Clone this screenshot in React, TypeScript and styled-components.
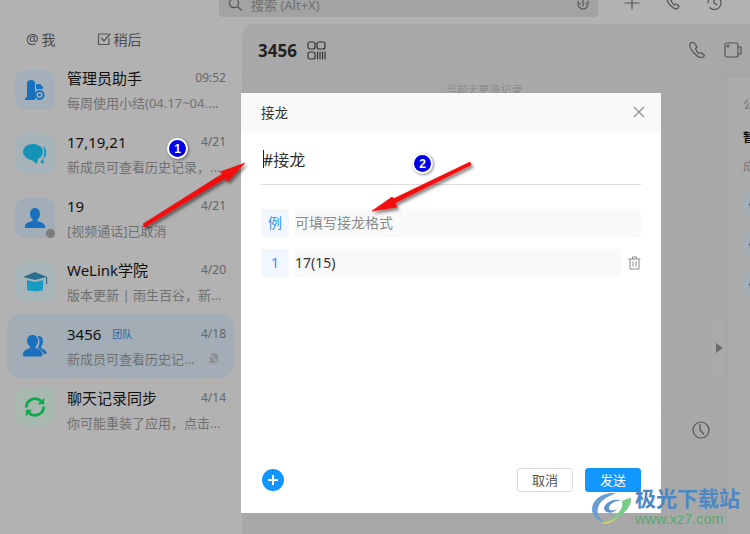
import React from 'react';
import styled, { createGlobalStyle } from 'styled-components';

const GlobalStyle = createGlobalStyle`
  html, body {
    margin: 0;
    padding: 0;
    background: #b2b2b2;
  }
  * {
    box-sizing: border-box;
  }
  body {
    font-family: "Noto Sans", "Noto Sans CJK SC", sans-serif;
  }
`;

const Root = styled.div`
  position: relative;
  width: 750px;
  height: 534px;
  overflow: hidden;
  display: flex;
  flex-direction: column;
  background: #b2b2b2;
`;

const TopBar = styled.div`
  height: 24px;
  flex-shrink: 0;
  display: flex;
  align-items: flex-start;
  padding-left: 219px;
  overflow: hidden;
`;

const SearchBox = styled.div`
  width: 379px;
  height: 26px;
  margin-top: -9px;
  padding: 0 7px 0 9px;
  display: flex;
  align-items: center;
  gap: 9px;
  border-radius: 4px;
  background: #a3a3a3;
  color: #6f6f6f;
  font-size: 13px;
`;

const SearchText = styled.span`
  flex: 1;
`;

const TopActions = styled.div`
  display: flex;
  gap: 23px;
  margin-left: 25px;
  margin-top: -6px;
`;

const Body = styled.div`
  flex: 1;
  display: flex;
  min-height: 0;
`;

const Sidebar = styled.aside`
  width: 242px;
  flex-shrink: 0;
  display: flex;
  flex-direction: column;
`;

const Tabs = styled.div`
  height: 34px;
  padding: 0 0 5px 26px;
  display: flex;
  align-items: center;
  gap: 41px;
`;

const Tab = styled.div`
  display: flex;
  align-items: center;
  gap: 3px;
  font-size: 14px;
  color: #4c4c4c;
`;

const ChatList = styled.div`
  display: flex;
  flex-direction: column;
`;

const ChatRow = styled.div<{ $active?: boolean }>`
  width: 227px;
  height: 64px;
  margin-left: 7px;
  padding: 0 8px;
  display: flex;
  align-items: center;
  gap: 12px;
  border-radius: 14px;
  background: ${({ $active }) => ($active ? '#a2adb6' : 'transparent')};
`;

const IconTile = styled.div<{ $bg: string; $lift?: boolean }>`
  position: relative;
  width: 40px;
  height: 40px;
  flex-shrink: 0;
  margin-bottom: ${({ $lift }) => ($lift ? '6px' : '0')};
  display: flex;
  align-items: center;
  justify-content: center;
  border-radius: 11px;
  background: ${({ $bg }) => $bg};
`;

const StatusDot = styled.span`
  position: absolute;
  right: 0;
  bottom: 0;
  width: 9px;
  height: 9px;
  border-radius: 50%;
  background: #7c7c7c;
`;

const ChatInfo = styled.div`
  flex: 1;
  min-width: 0;
  display: flex;
  flex-direction: column;
  gap: 5px;
`;

const ChatLine = styled.div`
  display: flex;
  align-items: center;
  justify-content: space-between;
  height: 20px;
`;

const ChatName = styled.div`
  display: flex;
  align-items: center;
  gap: 11px;
  font-size: 15px;
  color: #111;
`;

const TeamTag = styled.span`
  font-size: 10px;
  color: #2a6aa5;
`;

const ChatTime = styled.span`
  font-size: 12px;
  color: #666;
`;

const ChatPreview = styled.span`
  font-size: 13px;
  color: #707070;
  white-space: nowrap;
`;

const MuteIcon = styled.svg`
  margin-right: 5px;
`;

const ChatPanel = styled.main`
  flex: 1;
  min-width: 0;
  display: flex;
  flex-direction: column;
  border-top-left-radius: 12px;
  background: #a8a8a8;
`;

const PanelHeader = styled.header`
  height: 53px;
  flex-shrink: 0;
  padding: 0 8px 0 16px;
  display: flex;
  align-items: center;
  gap: 10px;
  border-bottom: 1px solid #a2a2a2;
`;

const PanelTitle = styled.h1`
  margin: 0;
  font-size: 17px;
  font-weight: 700;
  color: #222;
`;

const HeaderActions = styled.div`
  margin-left: auto;
  display: flex;
  gap: 18px;
`;

const PanelBody = styled.div`
  flex: 1;
  display: flex;
  min-height: 0;
`;

const Conversation = styled.section`
  position: relative;
  flex: 1;
  display: flex;
  flex-direction: column;
`;

const Notice = styled.div`
  flex: 1;
  padding-top: 4px;
  text-align: center;
  font-size: 11px;
  color: #8c8c8c;
`;

const Compose = styled.div`
  height: 122px;
  padding: 8px 16px 0 0;
  display: flex;
  justify-content: flex-end;
  align-items: flex-start;
  border-top: 1px solid #a2a2a2;
`;

const CollapseHandle = styled.div`
  position: absolute;
  right: 0;
  top: 243px;
  width: 15px;
  height: 56px;
  display: flex;
  align-items: center;
  justify-content: center;
  border-radius: 8px 0 0 8px;
  background: #aaaaaa;
`;

const Triangle = styled.span`
  width: 0;
  height: 0;
  border-top: 5px solid transparent;
  border-bottom: 5px solid transparent;
  border-left: 7px solid #6c6c6c;
  margin-left: 2px;
`;

const SidePanel = styled.aside`
  width: 24px;
  flex-shrink: 0;
  padding: 17px 0 0 16px;
  display: flex;
  flex-direction: column;
  border-left: 1px solid #a2a2a2;
  background: #ababab;
  overflow: hidden;
  white-space: nowrap;
`;

const SideLabel = styled.div<{ $dark?: boolean }>`
  height: ${({ $dark }) => ($dark ? '30px' : '20px')};
  margin-bottom: ${({ $dark }) => ($dark ? '4px' : '8px')};
  display: flex;
  align-items: center;
  font-size: 12px;
  font-weight: ${({ $dark }) => ($dark ? 700 : 400)};
  color: ${({ $dark }) => ($dark ? '#111' : '#737373')};
`;

const SidePills = styled.div`
  display: flex;
  flex-direction: column;
  gap: 16px;
  margin-top: 8px;
`;

const SidePill = styled.div`
  width: 24px;
  height: 24px;
  display: flex;
  align-items: center;
  padding-left: 6px;
  border-radius: 6px;
  background: #a2adb6;
  &::before {
    content: '';
    width: 3px;
    height: 3px;
    border-radius: 50%;
    background: #1a6cb2;
  }
`;

const Dialog = styled.div`
  position: absolute;
  left: 241px;
  top: 93px;
  width: 420px;
  height: 420px;
  display: flex;
  flex-direction: column;
  background: #fff;
`;

const ModalHeader = styled.div`
  height: 40px;
  flex-shrink: 0;
  padding: 0 16px 2px 20px;
  display: flex;
  align-items: center;
  justify-content: space-between;
  background: #f9f9f9;
  font-size: 13.5px;
  color: #333;
`;

const ModalBody = styled.div`
  flex: 1;
  padding: 0 20px;
  display: flex;
  flex-direction: column;
`;

const TitleField = styled.div`
  height: 52px;
  flex-shrink: 0;
  margin-bottom: 24px;
  padding-left: 2px;
  display: flex;
  align-items: center;
  border-bottom: 1px solid #dcdcdc;
  font-size: 16px;
  color: #333;
`;

const Caret = styled.span`
  width: 1px;
  height: 18px;
  margin-right: -1px;
  background: #222;
`;

const EntryRow = styled.div`
  display: flex;
  align-items: center;
  gap: 6px;
  height: 28px;
  margin-bottom: 12px;
`;

const EntryIndex = styled.div`
  width: 28px;
  height: 28px;
  flex-shrink: 0;
  padding-bottom: 2px;
  display: flex;
  align-items: center;
  justify-content: center;
  border-radius: 3px;
  background: #f0f7ff;
  color: #2f94f5;
  font-size: 14px;
`;

const EntryField = styled.div<{ $muted?: boolean }>`
  flex: 1;
  height: 28px;
  padding-bottom: 2px;
  display: flex;
  align-items: center;
  border-radius: 3px;
  background: #f9f9f9;
  font-size: 14px;
  color: ${({ $muted }) => ($muted ? '#8a8a8a' : '#333')};
`;

const TrashButton = styled.div`
  width: 14px;
  flex-shrink: 0;
  display: flex;
  justify-content: center;
`;

const ModalFooter = styled.div`
  height: 66px;
  flex-shrink: 0;
  padding: 0 20px 0 21px;
  display: flex;
  align-items: flex-start;
  justify-content: space-between;
`;

const AddButton = styled.div`
  width: 22px;
  height: 22px;
  margin-top: 22px;
  border-radius: 50%;
  background: #1296ff;
  display: flex;
  align-items: center;
  justify-content: center;
`;

const FooterActions = styled.div`
  display: flex;
  gap: 12px;
  margin-top: 21px;
`;

const Button = styled.div<{ $primary?: boolean }>`
  width: 56px;
  height: 24px;
  padding-bottom: 2px;
  display: flex;
  align-items: center;
  justify-content: center;
  border-radius: 3px;
  font-size: 13px;
  color: ${({ $primary }) => ($primary ? '#fff' : '#555')};
  background: ${({ $primary }) => ($primary ? '#1296ff' : '#fff')};
  border: 1px solid ${({ $primary }) => ($primary ? '#1296ff' : '#dcdcdc')};
`;

const AnnotationLayer = styled.svg`
  position: absolute;
  left: 0;
  top: 0;
  width: 750px;
  height: 534px;
  pointer-events: none;
`;

const StepBadge = styled.div<{ $x: number; $y: number }>`
  position: absolute;
  left: ${({ $x }) => $x}px;
  top: ${({ $y }) => $y}px;
  width: 21px;
  height: 21px;
  display: flex;
  align-items: center;
  justify-content: center;
  border-radius: 50%;
  border: 2px solid #fff;
  background: #0000e6;
  box-shadow: 1px 1px 3px rgba(0, 0, 0, 0.45);
  color: #fff;
  font-family: "Liberation Sans", sans-serif;
  font-size: 12px;
  font-weight: 700;
`;

const Watermark = styled.div`
  position: absolute;
  left: 590px;
  top: 484px;
  display: flex;
  align-items: flex-start;
  gap: 1px;
`;

const WatermarkText = styled.div`
  display: flex;
  flex-direction: column;
  align-items: flex-start;
`;

const WatermarkTitle = styled.span`
  font-family: "Noto Sans CJK SC", sans-serif;
  font-size: 21px;
  line-height: 26px;
  font-weight: 700;
  color: #4b88c4;
`;

const WatermarkUrl = styled.span`
  margin-top: 1px;
  font-family: "Liberation Sans", sans-serif;
  font-size: 14.5px;
  line-height: 16px;
  color: #58a870;
`;

const line = { fill: 'none', stroke: '#555', strokeWidth: 1.2, strokeLinecap: 'round', strokeLinejoin: 'round' } as const;

const BlueFill = '#1a70bc';

const icons = {
  admin: (
    <svg width="20" height="20" viewBox="0 0 20 20">
      <path d="M0 20v-2l2-1V3c0-2 2-3 4-3 2.500 0 4 1 4 3v17z" fill={BlueFill} />
      <path d="M11 4h4l3 3v2h-7z" fill={BlueFill} />
      <circle cx="14.500" cy="15" r="5" fill={BlueFill} />
      <circle cx="14.500" cy="15" r="3" fill="#a5afb9" />
      <circle cx="14.500" cy="15" r="1.400" fill={BlueFill} />
    </svg>
  ),
  group: (
    <svg width="24" height="21" viewBox="0 0 24 21">
      <ellipse cx="10" cy="8" rx="10" ry="8" fill="#1593b5" />
      <path d="M6 14l9 1-1 5z" fill="#1593b5" />
      <path d="M20 2c4 3 5 9 0 13l1 5-4-2c3-2 6-8 3-16z" fill="#1593b5" />
    </svg>
  ),
  user: (
    <svg width="22" height="22" viewBox="0 0 22 22">
      <path d="M11 1c3 0 5 2.500 5 6 0 2.500-1.200 4.500-2.500 5.500v1.500c3 1 6.500 2 7.500 4.500v2.500H1v-2.500C2 15.500 5.500 15 8.500 14v-1.500C7.200 11.500 6 9.500 6 7c0-3.500 2-6 5-6z" fill={BlueFill} />
    </svg>
  ),
  academy: (
    <svg width="26" height="24" viewBox="0 0 26 24">
      <path d="M13 2L25 7l-12 3L1 7z" fill="#2b6f8e" />
      <path d="M5 10l8 2 8-2v10c-2 1.500-14 1.500-16 0z" fill="#159bc4" />
      <rect x="24" y="7" width="1.200" height="7" fill="#2b6f8e" />
    </svg>
  ),
  team: (
    <svg width="24" height="22" viewBox="0 0 24 22">
      <path d="M15.500 1c3 0 4.500 2.200 4.500 5.500 0 2-.8 3.800-1.800 5v1.500c2 .8 4.300 2 5.300 4 .5 1 .3 2-.7 2h-2c-.8-2.600-3.500-4.500-6.500-5.700 1.300-1.500 2.200-3.800 2.200-6.300 0-2.400-.8-4.300-2-5.400.3-.3.600-.6 1-.6z" fill={BlueFill} />
      <path d="M9.500 0c3.500 0 5.500 2.500 5.500 6 0 2.500-1 4.500-2.500 5.500V13c3 1 6.500 2.500 7 6 .2 1.500-.5 2.500-1.500 2.500H1.500c-1 0-1.700-1-1.500-2.500.5-3.500 4-5 7-6v-1.500C5.500 10.500 4 8.500 4 6c0-3.500 2-6 5.500-6z" fill={BlueFill} />
    </svg>
  ),
  sync: (
    <svg width="22" height="22" viewBox="0 0 24 24" fill="none" stroke="#0ea84f" strokeWidth="3">
      <path d="M2.500 12.500a9.500 9.500 0 0 1 16-7" />
      <path d="M21.500 11.500a9.500 9.500 0 0 1-16 7" />
      <path d="M22 2v7h-7z" fill="#0ea84f" stroke="none" />
      <path d="M2 22v-7h7z" fill="#0ea84f" stroke="none" />
    </svg>
  ),
};

const chats = [
  { name: '管理员助手', time: '09:52', preview: '每周使用小结(04.17~04....', bg: '#a5afb9', icon: icons.admin },
  { name: '17,19,21', time: '4/21', preview: '新成员可查看历史记录，...', bg: '#a6b3b8', icon: icons.group },
  { name: '19', time: '4/21', preview: '[视频通话]已取消', bg: '#a3adb8', icon: icons.user, offline: true },
  { name: 'WeLink学院', time: '4/20', preview: '版本更新 | 雨生百谷，新...', bg: '#a8b5b8', icon: icons.academy },
  { name: '3456', time: '4/18', preview: '新成员可查看历史记...', bg: 'transparent', icon: icons.team, team: true, muted: true, active: true },
  { name: '聊天记录同步', time: '4/14', preview: '你可能重装了应用，点击...', bg: '#a8b9b0', icon: icons.sync, lift: true },
];

export default function App() {
  return (
    <Root>
      <GlobalStyle />
      <TopBar>
        <SearchBox>
          <svg width="14" height="14" viewBox="0 0 14 14" {...line}>
            <circle cx="6" cy="6" r="4.600" />
            <path d="M9.500 9.500L13 13" />
          </svg>
          <SearchText>搜索 (Alt+X)</SearchText>
          <svg width="16" height="16" viewBox="0 0 16 16" {...line}>
            <path d="M3 5v3a5 5 0 0 0 10 0V5M8 4v6M5 7v1M11 7v1" />
          </svg>
        </SearchBox>
        <TopActions>
          <svg width="18" height="18" viewBox="0 0 18 18" {...line}>
            <path d="M9 2v13M2 9h14" />
          </svg>
          <svg width="18" height="18" viewBox="0 0 18 18" {...line}>
            <path d="M4 2c-2 2-1 6 2 9s6 5 8 3l1-2-3-2-2 1-3-4 1-2-2-3z" />
          </svg>
          <svg width="18" height="18" viewBox="0 0 18 18" {...line}>
            <path d="M3 9a6.500 6.500 0 1 1 2 4.700M9 5v4l3 2" />
          </svg>
        </TopActions>
      </TopBar>
      <Body>
        <Sidebar>
          <Tabs>
            <Tab>
              <span>@</span>
              <span>我</span>
            </Tab>
            <Tab>
              <svg width="14" height="14" viewBox="0 0 14 14" {...line}>
                <path d="M12 6.500V12.500H1.500V2H11M4.500 6l2.500 3 6-7" />
              </svg>
              <span>稍后</span>
            </Tab>
          </Tabs>
          <ChatList>
            {chats.map((chat) => (
              <ChatRow key={chat.name} $active={chat.active}>
                <IconTile $bg={chat.bg} $lift={chat.lift}>
                  {chat.icon}
                  {chat.offline && <StatusDot />}
                </IconTile>
                <ChatInfo>
                  <ChatLine>
                    <ChatName>
                      {chat.name}
                      {chat.team && <TeamTag>团队</TeamTag>}
                    </ChatName>
                    <ChatTime>{chat.time}</ChatTime>
                  </ChatLine>
                  <ChatLine>
                    <ChatPreview>{chat.preview}</ChatPreview>
                    {chat.muted && (
                      <MuteIcon width="14" height="14" viewBox="0 0 14 14">
                        <path d="M7 1c2.500 0 4 2 4 4v4l1.500 2h-11L3 9V5c0-2 1.500-4 4-4zM5.500 12h3L7 13.500z" fill="#8f8f8f" />
                        <path d="M2 1.500l10 11" stroke="#a2adb6" strokeWidth="1.200" />
                      </MuteIcon>
                    )}
                  </ChatLine>
                </ChatInfo>
              </ChatRow>
            ))}
          </ChatList>
        </Sidebar>
        <ChatPanel>
          <PanelHeader>
            <PanelTitle>3456</PanelTitle>
            <svg width="19" height="19" viewBox="0 0 19 19" {...line} stroke="#333">
              <rect x="1" y="1" width="7" height="7" rx="2" />
              <rect x="10" y="1" width="8" height="7" rx="2" />
              <rect x="1" y="11" width="7" height="7" rx="2" />
              <path d="M10.500 11v7M13 11v7M15.500 11v7M18 11v7" />
            </svg>
            <HeaderActions>
              <svg width="18" height="18" viewBox="0 0 18 18" {...line}>
                <path d="M3 1.500c-2 2-1 6 2.500 10s7 6 10 4.500l1-1.500-3.500-3-2 1c-1.500-1-3-3-3.500-5l1.500-1.500L6 1.500z" />
              </svg>
              <svg width="18" height="18" viewBox="0 0 18 18" {...line}>
                <rect x="1" y="2" width="13" height="14" rx="2" />
                <path d="M14 6h3v7h-3" />
                <circle cx="4" cy="5" r="1" />
              </svg>
            </HeaderActions>
          </PanelHeader>
          <PanelBody>
            <Conversation>
              <Notice>当前无更多记录</Notice>
              <CollapseHandle>
                <Triangle />
              </CollapseHandle>
              <Compose>
                <svg width="18" height="18" viewBox="0 0 18 18" {...line}>
                  <circle cx="9" cy="9" r="8" />
                  <path d="M8 3.500V9l3.500 4" />
                </svg>
              </Compose>
            </Conversation>
            <SidePanel>
              <SideLabel>公告</SideLabel>
              <SideLabel $dark>暂无公告</SideLabel>
              <SideLabel>成员</SideLabel>
              <SidePills>
                <SidePill />
                <SidePill />
                <SidePill />
              </SidePills>
            </SidePanel>
          </PanelBody>
        </ChatPanel>
      </Body>

      <Dialog>
        <ModalHeader>
          <span>接龙</span>
          <svg width="12" height="12" viewBox="0 0 12 12" fill="none" stroke="#8c8c8c" strokeWidth="1.100">
            <path d="M1 1l10 10M11 1L1 11" />
          </svg>
        </ModalHeader>
        <ModalBody>
          <TitleField>
            <Caret />
            <span>#接龙</span>
          </TitleField>
          <EntryRow>
            <EntryIndex>例</EntryIndex>
            <EntryField $muted>可填写接龙格式</EntryField>
          </EntryRow>
          <EntryRow>
            <EntryIndex>1</EntryIndex>
            <EntryField>17(15)</EntryField>
            <TrashButton>
              <svg width="13" height="14" viewBox="0 0 13 14" fill="none" stroke="#8c8c8c" strokeWidth="1">
                <path d="M.5 3h12M4.500 3V1h4v2M2 3v10h9V3M5 5.500v5M8 5.500v5" />
              </svg>
            </TrashButton>
          </EntryRow>
        </ModalBody>
        <ModalFooter>
          <AddButton>
            <svg width="12" height="12" viewBox="0 0 12 12" stroke="#fff" strokeWidth="2">
              <path d="M6 1v10M1 6h10" />
            </svg>
          </AddButton>
          <FooterActions>
            <Button>取消</Button>
            <Button $primary>发送</Button>
          </FooterActions>
        </ModalFooter>
      </Dialog>

      <AnnotationLayer viewBox="0 0 750 534">
        <defs>
          <filter id="arrow-shadow" x="-20%" y="-20%" width="140%" height="140%">
            <feDropShadow dx="2" dy="2.500" stdDeviation="1.800" floodColor="#000" floodOpacity="0.5" />
          </filter>
        </defs>
        <g fill="#f40808" stroke="#f40808" strokeWidth="0.6" strokeLinejoin="round" filter="url(#arrow-shadow)">
          <polygon points="143,224 223,173.500 220,172 245,163 227,182 226,177.500 145,227" />
          <polygon points="470,162 394,198.500 392,197 372,211 397,207 395,203 471,165" />
        </g>
      </AnnotationLayer>
      <StepBadge $x={167} $y={138}>1</StepBadge>
      <StepBadge $x={412} $y={153}>2</StepBadge>

      <Watermark>
        <svg width="44" height="42" viewBox="0 0 44 42">
          <path d="M26 9C12 8 2 16 2 25c0 8 7 12 12 13-6-4-8-10-5-17 4-7 11-9 17-12z" fill="#6b9fd4" />
          <path d="M14 24c2-7 12-10 18-7-6-1-13 3-13 7 0 3 5 3 8 1-3 5-13 5-13-1z" fill="#5f93cc" />
          <path d="M41 14c1 10-9 19-25 24 10-6 18-12 16-21 4-2 7-3 9-3z" fill="#78cc86" />
          <path d="M10 39c8-1 14-3 18-6-4 5-12 8-18 6z" fill="#cfd860" />
        </svg>
        <WatermarkText>
          <WatermarkTitle>极光下载站</WatermarkTitle>
          <WatermarkUrl>www.xz7.com</WatermarkUrl>
        </WatermarkText>
      </Watermark>
    </Root>
  );
}
